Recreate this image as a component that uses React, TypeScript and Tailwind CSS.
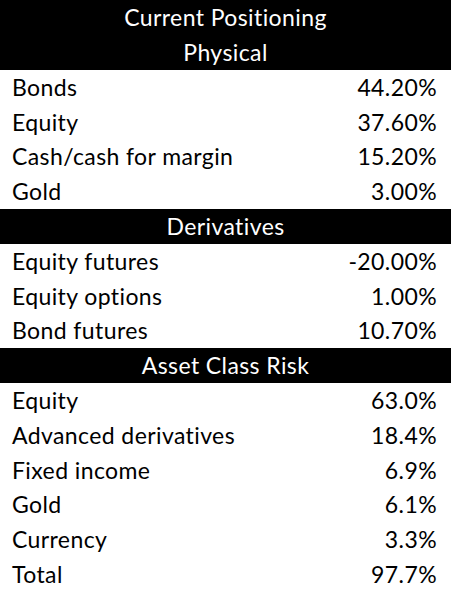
const sections = [
  {
    title: ['Current Positioning', 'Physical'],
    rows: [
      ['Bonds', '44.20%'],
      ['Equity', '37.60%'],
      ['Cash/cash for margin', '15.20%'],
      ['Gold', '3.00%'],
    ],
  },
  {
    title: ['Derivatives'],
    rows: [
      ['Equity futures', '-20.00%'],
      ['Equity options', '1.00%'],
      ['Bond futures', '10.70%'],
    ],
  },
  {
    title: ['Asset Class Risk'],
    rows: [
      ['Equity', '63.0%'],
      ['Advanced derivatives', '18.4%'],
      ['Fixed income', '6.9%'],
      ['Gold', '6.1%'],
      ['Currency', '3.3%'],
      ['Total', '97.7%'],
    ],
  },
];

const App = () => {
  return (
    <div className="w-[452px] h-[604px] bg-white text-black font-['Lato',sans-serif] text-[23px] tracking-[0.4px] [font-variant-ligatures:none]">
      <div className="w-[451px]">
        {sections.map((section) => (
          <div key={section.title[0]}>
            {/* Section header */}
            <div className="bg-black text-white">
              {section.title.map((line) => (
                <div key={line} className="h-[34.8px] flex items-center justify-center">
                  {line}
                </div>
              ))}
            </div>

            {/* Rows */}
            {section.rows.map(([label, value]) => (
              <div key={label} className="h-[34.8px] flex items-center justify-between pl-[12px] pr-[14px]">
                <span>{label}</span>
                <span>{value}</span>
              </div>
            ))}
          </div>
        ))}
      </div>
    </div>
  );
};

export default App;
